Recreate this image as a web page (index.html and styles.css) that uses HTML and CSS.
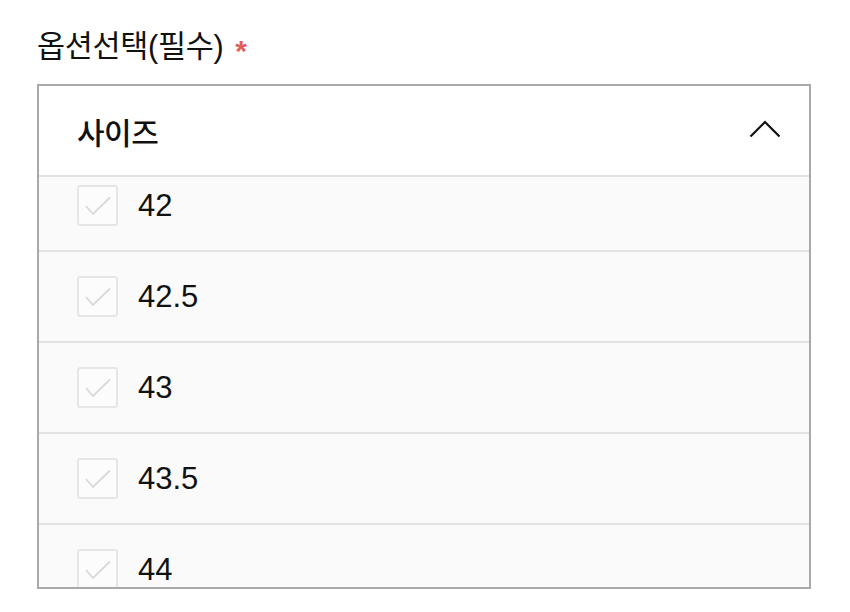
FILE: index.html
```html
<!DOCTYPE html>
<html lang="ko">
<head>
<meta charset="utf-8">
<link rel="stylesheet" href="styles.css">
</head>
<body>
<div class="field">
  <div class="label">옵션선택(필수) <span class="req">*</span></div>
  <div class="select">
    <div class="select-head">
      <span class="head-text">사이즈</span>
      <svg class="chev" width="32" height="18" viewBox="0 0 32 18"><path d="M1.5 16.5 L16 2 L30.5 16.5" fill="none" stroke="#111" stroke-width="2.2"/></svg>
    </div>
    <div class="list-wrap">
      <ul class="list">
        <li class="row"><span class="box"><svg width="26" height="20" viewBox="0 0 26 20"><path d="M1 10 L8 18 L25 1.5" fill="none" stroke="#d9d9d9" stroke-width="1.8"/></svg></span><span class="val">42</span></li>
        <li class="row"><span class="box"><svg width="26" height="20" viewBox="0 0 26 20"><path d="M1 10 L8 18 L25 1.5" fill="none" stroke="#d9d9d9" stroke-width="1.8"/></svg></span><span class="val">42.5</span></li>
        <li class="row"><span class="box"><svg width="26" height="20" viewBox="0 0 26 20"><path d="M1 10 L8 18 L25 1.5" fill="none" stroke="#d9d9d9" stroke-width="1.8"/></svg></span><span class="val">43</span></li>
        <li class="row"><span class="box"><svg width="26" height="20" viewBox="0 0 26 20"><path d="M1 10 L8 18 L25 1.5" fill="none" stroke="#d9d9d9" stroke-width="1.8"/></svg></span><span class="val">43.5</span></li>
        <li class="row"><span class="box"><svg width="26" height="20" viewBox="0 0 26 20"><path d="M1 10 L8 18 L25 1.5" fill="none" stroke="#d9d9d9" stroke-width="1.8"/></svg></span><span class="val">44</span></li>
      </ul>
    </div>
  </div>
</div>
</body>
</html>
```
FILE: styles.css
```css
* { box-sizing: border-box; }
html, body { margin: 0; padding: 0; background: #fff; }
body {
  font-family: "Liberation Sans", "Noto Sans CJK KR", sans-serif;
  color: #111;
}
.field {
  padding: 26px 0 0 37px;
  width: 811px;
}
.label {
  font-size: 30.5px;
  line-height: 40px;
  height: 40px;
  margin-bottom: 18px;
  letter-spacing: -0.3px;
  display: flex;
  align-items: center;
}
.req {
  color: #e0605a;
  font-size: 30px;
  font-weight: 700;
  margin-left: 12px;
  line-height: 1;
  display: inline-block;
  transform: translateY(5px);
}
.select {
  border: 2px solid #a9a9a9;
  height: 505px;
  display: flex;
  flex-direction: column;
  overflow: hidden;
}
.select-head {
  height: 91px;
  flex: none;
  border-bottom: 2px solid #e2e2e2;
  background: #fff;
  display: flex;
  align-items: center;
  justify-content: space-between;
  padding: 0 28px 0 38px;
}
.head-text {
  font-size: 30px;
  font-weight: 500;
  letter-spacing: -0.5px;
}
.chev { display: block; margin-top: -4px; }
.list-wrap {
  flex: 1;
  overflow: hidden;
  background: #fafafa;
}
.list {
  list-style: none;
  margin: -16px 0 0 0;
  padding: 0;
}
.row {
  height: 91px;
  border-bottom: 2px solid #e2e2e2;
  display: flex;
  align-items: center;
  padding-left: 38px;
}
.box {
  width: 41px;
  height: 41px;
  border: 2px solid #e6e6e6;
  border-radius: 3px;
  background: #fcfcfc;
  display: flex;
  align-items: center;
  justify-content: center;
  margin-right: 20px;
}
.box svg { display: block; }
.val {
  font-size: 31px;
  line-height: 1;
}
```
